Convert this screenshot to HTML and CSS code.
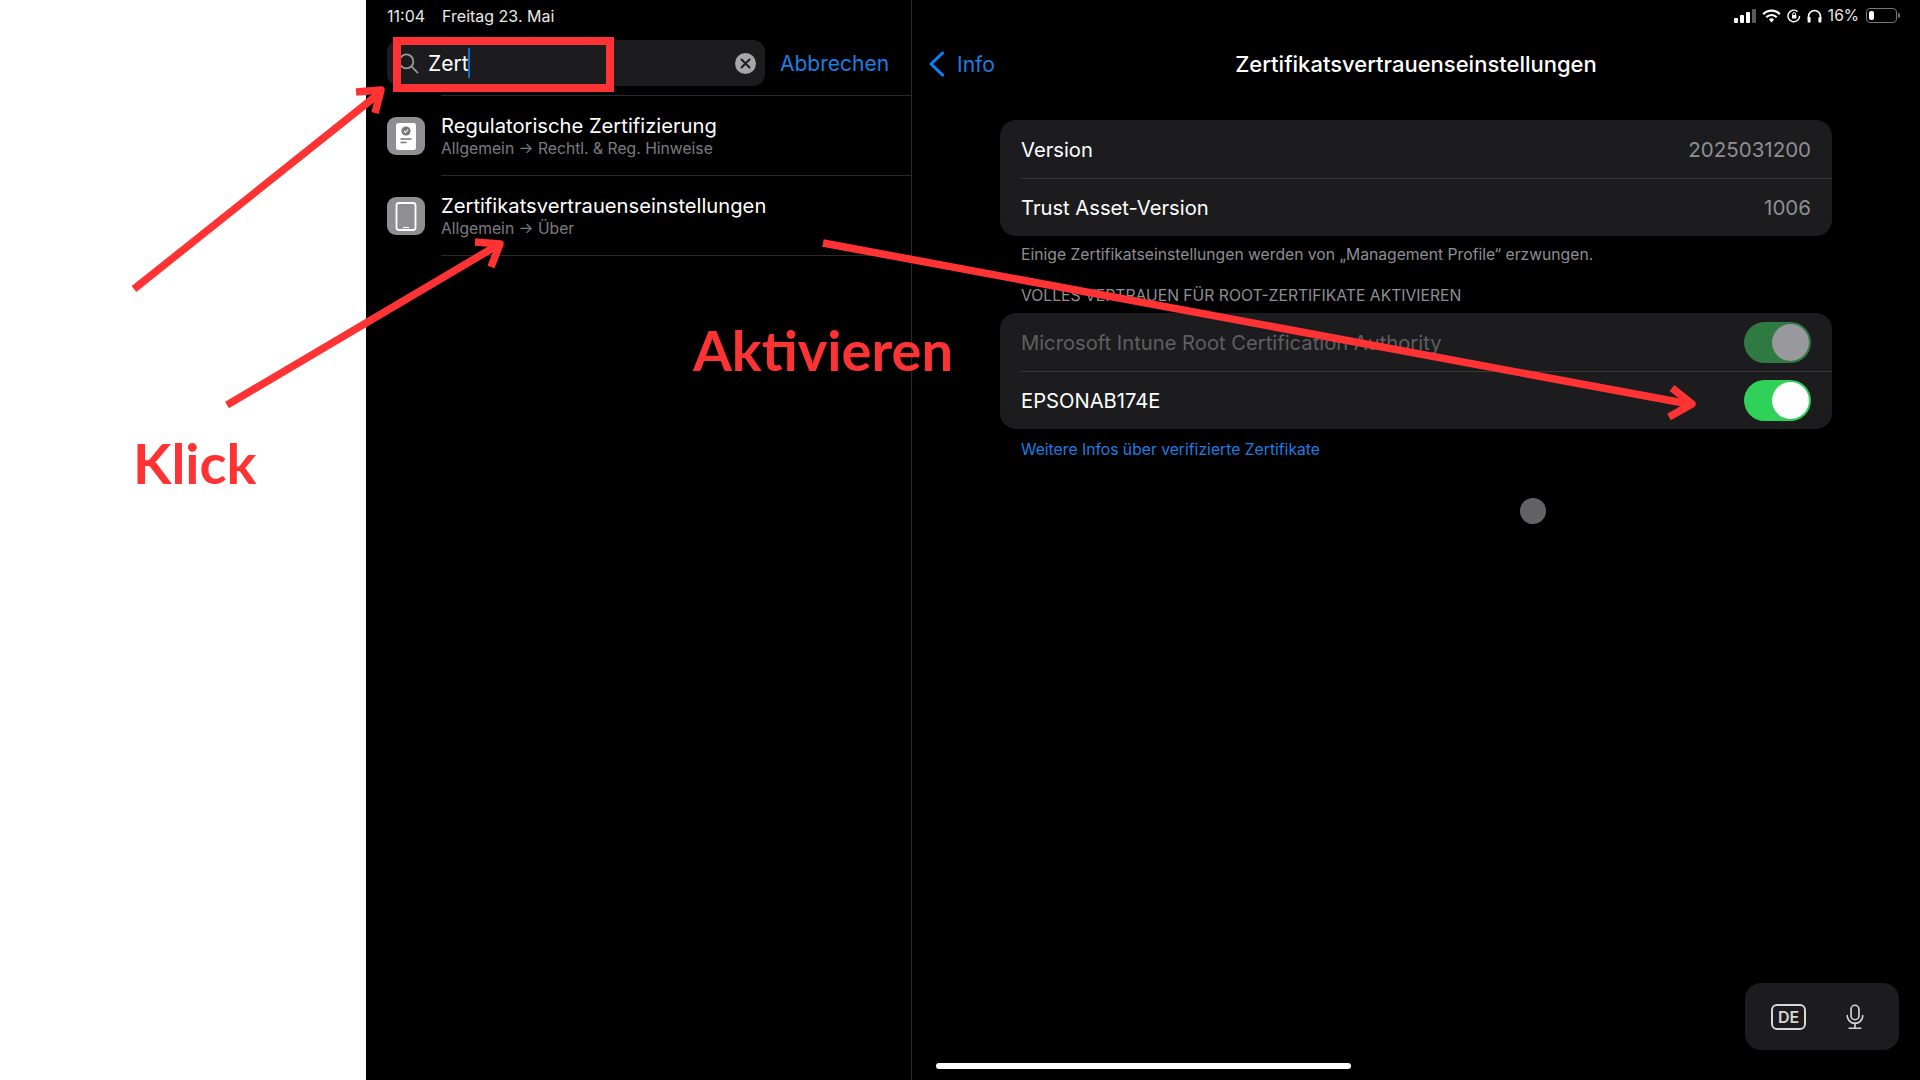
FILE: index.html
```html
<!DOCTYPE html>
<html lang="de">
<head>
    <meta charset="UTF-8">
    <title>Zertifikatsvertrauenseinstellungen</title>
    <link rel="stylesheet" href="styles.css">
</head>
<body>
    <div class="page">
        <div class="blank"></div>
        <div class="screen">
            <div class="sidebar">
                <div class="status-left"><span class="time">11:04</span><span>Freitag 23. Mai</span></div>
                <div class="search-row">
                    <div class="search-field">
                        <svg class="search-icon" width="21" height="21" viewBox="0 0 20 20" fill="none" stroke="#98989d" stroke-width="1.7" stroke-linecap="round">
                            <circle cx="8" cy="8" r="6.6"/>
                            <path d="M12.8 12.8L18.6 18.6"/>
                        </svg>
                        <span class="search-text">Zert</span><span class="caret"></span>
                        <span class="search-clear">
                            <svg width="11" height="11" viewBox="0 0 11 11" stroke="#1c1c1e" stroke-width="2" stroke-linecap="round"><path d="M1.5 1.5L9.5 9.5M9.5 1.5L1.5 9.5"/></svg>
                        </span>
                    </div>
                    <span class="cancel">Abbrechen</span>
                </div>
                <div class="rule"></div>
                <div class="result">
                    <div class="result-icon">
                        <svg width="38" height="38" viewBox="0 0 38 38">
                            <rect x="9" y="6" width="20" height="27" rx="2.5" fill="#fff"/>
                            <circle cx="19" cy="14" r="4.6" fill="#77777c"/>
                            <path d="M17 14l1.5 1.5 2.6-3" fill="none" stroke="#fff" stroke-width="1.1"/>
                            <path d="M13.5 22h11M13.5 25.5h6" stroke="#77777c" stroke-width="1.3"/>
                        </svg>
                    </div>
                    <div class="result-body">
                        <div class="result-title">Regulatorische Zertifizierung</div>
                        <div class="result-path">Allgemein → Rechtl. &amp; Reg. Hinweise</div>
                    </div>
                </div>
                <div class="result">
                    <div class="result-icon">
                        <svg width="38" height="38" viewBox="0 0 38 38" fill="none">
                            <rect x="9.5" y="6" width="19" height="27" rx="2.5" stroke="#fff" stroke-width="1.8"/>
                            <path d="M16 30.5h6" stroke="#fff" stroke-width="1.2"/>
                        </svg>
                    </div>
                    <div class="result-body">
                        <div class="result-title">Zertifikatsvertrauenseinstellungen</div>
                        <div class="result-path">Allgemein → Über</div>
                    </div>
                </div>
            </div>

            <div class="detail">
                <div class="status-right">
                    <svg width="22" height="14" viewBox="0 0 22 14" fill="#fff">
                        <rect x="0" y="9" width="4" height="5" rx="1"/>
                        <rect x="6" y="6" width="4" height="8" rx="1"/>
                        <rect x="12" y="3" width="4" height="11" rx="1"/>
                        <rect x="18" y="0" width="4" height="14" rx="1" fill="#5a5a5e"/>
                    </svg>
                    <svg width="19" height="14" viewBox="0 0 19 14" fill="none" stroke="#fff" stroke-width="2.2">
                        <path d="M1.2 5.2a11.6 11.6 0 0 1 16.6 0"/>
                        <path d="M4.3 8.2a7.2 7.2 0 0 1 10.4 0"/>
                        <path d="M9.5 13.5l-2.6-3a3.6 3.6 0 0 1 5.2 0z" fill="#fff" stroke="none"/>
                    </svg>
                    <svg width="14" height="14" viewBox="0 0 14 14" fill="none" stroke="#fff" stroke-width="1.4">
                        <path d="M12.6 7a5.8 5.8 0 1 1-2-4.4"/>
                        <rect x="5" y="6" width="4.4" height="3.6" rx=".6" fill="#fff" stroke="none"/>
                        <path d="M5.8 6V5a1.4 1.4 0 0 1 2.8 0v1" stroke-width="1"/>
                    </svg>
                    <svg width="15" height="14" viewBox="0 0 15 14" fill="none" stroke="#fff" stroke-width="1.7">
                        <path d="M1.5 10V7.5a6 6 0 0 1 12 0V10"/>
                        <rect x=".6" y="8" width="3" height="5.6" rx="1.2" fill="#fff" stroke="none"/>
                        <rect x="11.4" y="8" width="3" height="5.6" rx="1.2" fill="#fff" stroke="none"/>
                    </svg>
                    <span class="battery-text">16%</span>
                    <span class="battery"><span class="battery-level"></span></span>
                    <span class="battery-nub"></span>
                </div>

                <div class="nav">
                    <div class="nav-back">
                        <svg width="17" height="26" viewBox="0 0 17 26" fill="none" stroke="#0a84ff" stroke-width="3" stroke-linecap="round" stroke-linejoin="round">
                            <path d="M14.5 2L3 13l11.5 11"/>
                        </svg>
                        <span>Info</span>
                    </div>
                    <div class="nav-title">Zertifikatsvertrauenseinstellungen</div>
                </div>

                <div class="group">
                    <div class="row">
                        <span class="row-label">Version</span>
                        <span class="row-value">2025031200</span>
                    </div>
                    <div class="row">
                        <span class="row-label">Trust Asset-Version</span>
                        <span class="row-value">1006</span>
                    </div>
                </div>
                <div class="note">Einige Zertifikatseinstellungen werden von „Management Profile“ erzwungen.</div>
                <div class="group-header">VOLLES VERTRAUEN FÜR ROOT-ZERTIFIKATE AKTIVIEREN</div>
                <div class="group">
                    <div class="row">
                        <span class="row-label disabled">Microsoft Intune Root Certification Authority</span>
                        <span class="toggle toggle-off"><span class="knob"></span></span>
                    </div>
                    <div class="row">
                        <span class="row-label">EPSONAB174E</span>
                        <span class="toggle"><span class="knob"></span></span>
                    </div>
                </div>
                <div class="more-link">Weitere Infos über verifizierte Zertifikate</div>
            </div>
        </div>

        <!-- overlays -->
        <div class="touch-dot"></div>
        <div class="kb-pill">
            <span class="kb-lang">DE</span>
            <svg width="18" height="28" viewBox="0 0 20 28" fill="none" stroke="#d6d6d6" stroke-width="1.8" stroke-linecap="round">
                <rect x="5.6" y="1" width="8.8" height="16" rx="4.4"/>
                <path d="M1.4 12.5a8.6 8.6 0 0 0 17.2 0"/>
                <path d="M10 21v5.5M3.5 26.5h13"/>
            </svg>
        </div>
        <div class="home-bar"></div>

        <div class="mark-box"></div>
        <div class="mark-text mark-klick">Klick</div>
        <div class="mark-text mark-akt">Aktivieren</div>
        <svg class="mark-arrows" width="1920" height="1080" viewBox="0 0 1920 1080" fill="none" stroke="#ff3333" stroke-width="7.5" stroke-linejoin="round">
            <path d="M134 289L381 92"/>
            <path d="M356 92L381 90L375 113"/>
            <path d="M227 405L498 245"/>
            <path d="M475 242L500 244L491 267"/>
            <path d="M823 243L1689 404"/>
            <path d="M1672 388L1692 404L1669 417"/>
        </svg>
    </div>
</body>
</html>
```

FILE: styles.css
```css
html, body {
    margin: 0;
    padding: 0;
}
body {
    font-family: Inter, "Liberation Sans", sans-serif;
    background-color: #fff;
    color: #fff;
}
.page {
    position: relative;
    display: flex;
    width: 1920px;
    height: 1080px;
    overflow: hidden;
}
.blank {
    width: 366px;
    background-color: #fff;
}
.screen {
    flex: 1;
    display: flex;
    background-color: #000;
}

/* left column */
.sidebar {
    width: 545px;
    border-right: 1px solid #2a2a2c;
}
.status-left {
    height: 31px;
    display: flex;
    align-items: center;
    padding-left: 21px;
    font-size: 16px;
    color: #e8e8e8;
}
.time {
    margin-right: 17px;
}
.search-row {
    display: flex;
    align-items: center;
    margin-top: 9px;
    padding-left: 21px;
}
.search-field {
    width: 378px;
    height: 46px;
    box-sizing: border-box;
    display: flex;
    align-items: center;
    padding-left: 11px;
    background-color: #1c1c1e;
    border-radius: 12px;
}
.search-text {
    margin-left: 9px;
    font-size: 21px;
}
.caret {
    width: 2px;
    height: 30px;
    margin-left: -1px;
    background-color: #0a6fd8;
}
.search-clear {
    margin-left: auto;
    margin-right: 9px;
    width: 21px;
    height: 21px;
    border-radius: 50%;
    background-color: #a5a5aa;
    display: flex;
    align-items: center;
    justify-content: center;
}
.cancel {
    margin-left: 15px;
    font-size: 21px;
    color: #1a7fe0;
}
.rule {
    height: 1px;
    margin: 9px 0 0 75px;
    background-color: #2a2a2c;
}
.result {
    display: flex;
    padding-left: 21px;
    height: 80px;
}
.result-icon {
    width: 38px;
    height: 38px;
    margin-top: 21px;
    margin-right: 16px;
    background-color: #8e8e93;
    border-radius: 9px;
    flex-shrink: 0;
}
.result-icon svg {
    display: block;
}
.result-body {
    flex: 1;
    border-bottom: 1px solid #2a2a2c;
    padding-top: 17px;
}
.result-title {
    font-size: 20.2px;
    line-height: 26px;
}
.result-path {
    font-size: 15.7px;
    line-height: 19px;
    color: #7c7c80;
}

/* right column */
.detail {
    flex: 1;
}
.status-right {
    height: 31px;
    display: flex;
    align-items: center;
    justify-content: flex-end;
    gap: 6px;
    padding-right: 20px;
}
.battery-text {
    font-size: 15.5px;
    color: #e8e8e8;
}
.battery {
    width: 31px;
    height: 15px;
    box-sizing: border-box;
    margin-left: 1px;
    padding: 2px;
    border: 1px solid #77777a;
    border-radius: 4px;
    display: flex;
}
.battery-level {
    width: 5px;
    background-color: #fff;
    border-radius: 2px;
}
.battery-nub {
    width: 2px;
    height: 5px;
    margin-left: -5px;
    background-color: #77777a;
    border-radius: 0 2px 2px 0;
}
.nav {
    position: relative;
    height: 66px;
    display: flex;
    align-items: center;
    justify-content: center;
    margin-bottom: 23px;
}
.nav-back {
    position: absolute;
    left: 16px;
    display: flex;
    align-items: center;
    gap: 12px;
    font-size: 21px;
    color: #1a7fe0;
}
.nav-title {
    font-size: 22px;
    font-weight: 500;
}
.group {
    margin: 0 88px;
    background-color: #1c1c1e;
    border-radius: 16px;
    overflow: hidden;
}
.row {
    height: 58px;
    box-sizing: border-box;
    display: flex;
    align-items: center;
    justify-content: space-between;
    margin-left: 21px;
    padding-right: 21px;
}
.row + .row {
    border-top: 1px solid #38383a;
}
.row-label {
    font-size: 20.2px;
}
.row-value {
    font-size: 20.5px;
    color: #8e8e93;
}
.row-label.disabled {
    color: #5f5f62;
}
.note, .group-header, .more-link {
    margin: 0 88px;
    padding-left: 21px;
    font-size: 15.7px;
    line-height: 20px;
    color: #8e8e93;
}
.note {
    margin-top: 9px;
}
.group-header {
    margin-top: 21px;
    margin-bottom: 7px;
}
.more-link {
    margin-top: 11px;
    color: #1a7fe0;
}
.toggle {
    width: 67px;
    height: 41px;
    box-sizing: border-box;
    padding: 2px;
    display: flex;
    justify-content: flex-end;
    border-radius: 21px;
    background-color: #30d158;
}
.toggle-off {
    background-color: #2f7a42;
}
.knob {
    width: 37px;
    height: 37px;
    border-radius: 50%;
    background-color: #fff;
}
.toggle-off .knob {
    background-color: #98989d;
}

/* things lying over the screen */
.touch-dot {
    position: absolute;
    left: 1520px;
    top: 498px;
    width: 26px;
    height: 26px;
    border-radius: 50%;
    background-color: #636366;
}
.kb-pill {
    position: absolute;
    left: 1745px;
    top: 983px;
    width: 154px;
    height: 67px;
    box-sizing: border-box;
    padding: 0 35px 0 26px;
    display: flex;
    align-items: center;
    justify-content: space-between;
    background-color: #1c1c1e;
    border-radius: 16px;
}
.kb-lang {
    width: 35px;
    height: 26px;
    box-sizing: border-box;
    display: flex;
    align-items: center;
    justify-content: center;
    border: 2px solid #d6d6d6;
    border-radius: 6px;
    font-size: 16px;
    font-weight: 600;
    color: #d6d6d6;
}
.home-bar {
    position: absolute;
    left: 936px;
    top: 1063px;
    width: 415px;
    height: 6px;
    border-radius: 3px;
    background-color: #fff;
}

/* red annotations */
.mark-box {
    position: absolute;
    left: 393px;
    top: 37px;
    width: 221px;
    height: 55px;
    box-sizing: border-box;
    border: 8px solid #ff3333;
}
.mark-text {
    position: absolute;
    font-family: Lato, sans-serif;
    font-weight: 700;
    font-size: 56px;
    line-height: 68px;
    color: #ff3333;
}
.mark-klick {
    left: 133px;
    top: 429px;
}
.mark-akt {
    left: 693px;
    top: 316px;
}
.mark-arrows {
    position: absolute;
    left: 0;
    top: 0;
}
```
